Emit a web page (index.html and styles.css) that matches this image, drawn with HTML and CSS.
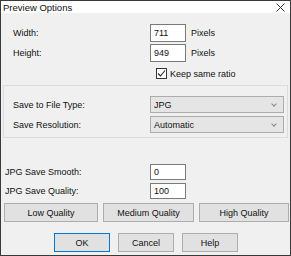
FILE: index.html
```html
<!DOCTYPE html>
<html lang="en">
<head>
  <meta charset="UTF-8" />
  <title>Preview Options</title>
  <link rel="stylesheet" href="styles.css">
</head>
<body>
  <div class="window">
    <div class="titlebar">
      <span class="title">Preview Options</span>
      <svg class="close" width="9" height="9" viewBox="0 0 9 9">
        <path d="M0.5 0.5 L8.5 8.5 M8.5 0.5 L0.5 8.5" stroke="#333" stroke-width="1" fill="none"/>
      </svg>
    </div>

    <div class="content">
      <!-- size -->
      <div class="field size-row">
        <label>Width:</label>
        <div class="textbox">711</div>
        <span class="unit">Pixels</span>
      </div>
      <div class="field size-row second">
        <label>Height:</label>
        <div class="textbox">949</div>
        <span class="unit">Pixels</span>
      </div>
      <div class="check-row">
        <span class="checkbox">
          <svg width="9" height="9" viewBox="0 0 9 9">
            <path d="M1 4.5 L3.5 7 L8 1.5" stroke="#222" stroke-width="1.1" fill="none"/>
          </svg>
        </span>
        <span>Keep same ratio</span>
      </div>

      <!-- file type group -->
      <div class="group">
        <div class="field group-row">
          <label>Save to File Type:</label>
          <div class="dropdown"><span>JPG</span><span class="chev"></span></div>
        </div>
        <div class="field group-row second">
          <label>Save Resolution:</label>
          <div class="dropdown"><span>Automatic</span><span class="chev"></span></div>
        </div>
      </div>

      <!-- jpg settings -->
      <div class="field jpg-row">
        <label>JPG Save Smooth:</label>
        <div class="textbox small">0</div>
      </div>
      <div class="field jpg-row second">
        <label>JPG Save Quality:</label>
        <div class="textbox small">100</div>
      </div>

      <div class="quality-row">
        <button>Low Quality</button>
        <button>Medium Quality</button>
        <button>High Quality</button>
      </div>

      <div class="action-row">
        <button class="default">OK</button>
        <button>Cancel</button>
        <button>Help</button>
      </div>
    </div>
  </div>
</body>
</html>
```

FILE: styles.css
```css
html, body {
  margin: 0;
  padding: 0;
}

/* dialog frame */
.window {
  width: 291px;
  height: 256px;
  box-sizing: border-box;
  border: 1px solid #3a3a3a;
  background: #f0f0f0;
  font-family: "Liberation Sans", Arial, sans-serif;
  font-size: 9px;
  color: #111;
  overflow: hidden;
}

.titlebar {
  height: 12px;
  background: #fff;
  display: flex;
  align-items: center;
  justify-content: space-between;
  padding: 0 5px 0 2px;
}
.title {
  font-size: 9.5px;
  color: #111;
}
.close {
  display: block;
}

.content {
  padding-top: 11px;
}

/* label + control rows */
.field {
  display: flex;
  align-items: center;
}
.field label {
  flex: 0 0 auto;
}

.size-row {
  height: 18px;
  padding-left: 12px;
}
.size-row label {
  width: 137px;
}
.second {
  margin-top: 2px;
}

.textbox {
  width: 36px;
  height: 100%;
  box-sizing: border-box;
  border: 1px solid #7a7a7a;
  background: #fff;
  padding-left: 3px;
  display: flex;
  align-items: center;
}
.unit {
  margin-left: 5px;
}

.check-row {
  display: flex;
  align-items: center;
  margin-top: 6px;
  padding-left: 155px;
  height: 11px;
}
.checkbox {
  width: 11px;
  height: 11px;
  box-sizing: border-box;
  border: 1px solid #333;
  background: #fff;
  display: flex;
  align-items: center;
  justify-content: center;
  margin-right: 3px;
}
.checkbox svg {
  display: block;
}

/* group box */
.group {
  margin: 6px 2px 0 2px;
  border: 1px solid #dcdcdc;
  padding: 10px 3px 4px 9px;
}
.group-row {
  height: 17px;
}
.group-row label {
  width: 137px;
}
.group-row.second {
  margin-top: 3px;
}
.dropdown {
  flex: 1;
  height: 100%;
  box-sizing: border-box;
  border: 1px solid #adadad;
  background: #e5e5e5;
  display: flex;
  align-items: center;
  justify-content: space-between;
  padding: 0 7px 0 3px;
}
.chev {
  width: 3px;
  height: 3px;
  border-right: 1px solid #888;
  border-bottom: 1px solid #888;
  transform: rotate(45deg);
  margin-top: -2px;
}

.group + .jpg-row {
  margin-top: 26px;
}
.jpg-row {
  height: 16px;
  padding-left: 4px;
}
.jpg-row.second {
  margin-top: 3px;
}
.jpg-row label {
  width: 145px;
}

/* buttons */
button {
  font-family: inherit;
  font-size: 9px;
  color: #111;
  background: #e1e1e1;
  border: 1px solid #adadad;
  padding: 0;
  margin: 0;
  box-sizing: border-box;
}

.quality-row {
  display: grid;
  grid-template-columns: 94px 91px 90px;
  column-gap: 5px;
  margin-top: 4px;
  padding-left: 3px;
}
.quality-row button {
  height: 19px;
}

.action-row {
  display: flex;
  justify-content: center;
  gap: 8px;
  margin-top: 11px;
  padding-left: 1px;
}
.action-row button {
  width: 56px;
  height: 19px;
}
.action-row .default {
  border: 1px solid #0078d7;
}
```
